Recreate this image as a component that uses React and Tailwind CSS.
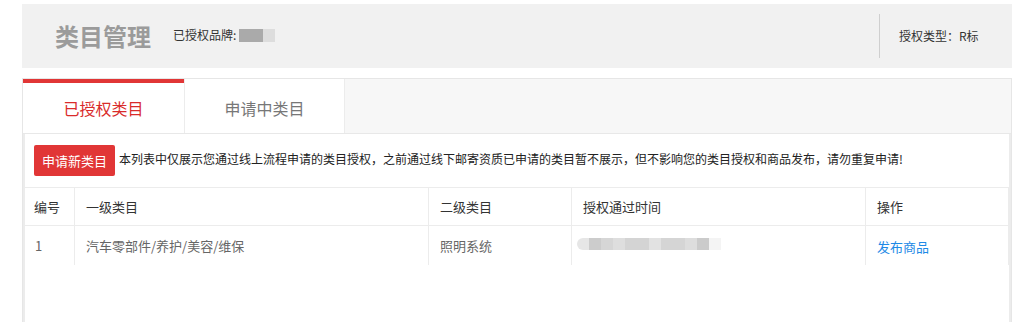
export default function App() {
  const font = { fontFamily: '"Noto Sans CJK SC", "Noto Sans", sans-serif' };
  const blocks = [
    ["#e6e6e6", 12],
    ["#cccccc", 12],
    ["#d6d6d6", 12],
    ["#dedede", 12],
    ["#d4d4d4", 24],
    ["#e2e2e2", 12],
    ["#d5d5d5", 24],
    ["#dddddd", 12],
    ["#cbcbcb", 12],
    ["#f4f4f4", 12],
  ];
  return (
    <div className="w-[1034px] h-[322px] bg-white overflow-hidden pt-1 px-[22px]" style={font}>
      {/* Header */}
      <div className="w-[990px] h-[64px] bg-[#f1f1f1] flex items-center">
        <div className="pl-[33px] text-[24px] font-bold text-[#9b9b9b] leading-none">类目管理</div>
        <div className="ml-[22px] flex items-center text-[12px] text-[#333] -mt-[2px]">
          <span>已授权品牌:</span>
          <span className="ml-[3px] w-[24px] h-[13px] bg-[#aaaaaa]" />
          <span className="w-[12px] h-[13px] bg-[#dddddd]" />
        </div>
        <div className="ml-auto w-[133px] h-[44px] border-l border-[#cfcfcf] flex items-center pl-[19px] text-[12px] text-[#333]">
          授权类型：R标
        </div>
      </div>

      {/* Tabs container */}
      <div className="mt-[10px] w-[990px] h-[300px] border border-[#e6e6e6] flex flex-col">
        <div className="h-[55px] bg-[#f7f7f7] border-b border-[#e8e8e8] flex shrink-0">
          <div className="w-[161px] bg-white border-t-[4px] border-[#e13636] flex items-center justify-center text-[16px] text-[#d92b2b] pb-[1px]">
            已授权类目
          </div>
          <div className="w-[161px] bg-white border-r border-l border-[#ececec] flex items-center justify-center text-[16px] text-[#777] pt-[3px]">
            申请中类目
          </div>
        </div>

        <div className="flex-1 border-x-[2px] border-[#ececec] bg-white">
          <div className="flex items-center mt-[11px] mb-[11px] pl-[9px] h-[31px]">
            <div className="w-[81px] h-[31px] bg-[#e13636] rounded-[2px] flex items-center justify-center text-white text-[13px]">
              申请新类目
            </div>
            <div className="ml-[4px] text-[12px] text-[#222] whitespace-nowrap -mt-[3px]">
              本列表中仅展示您通过线上流程申请的类目授权，之前通过线下邮寄资质已申请的类目暂不展示，但不影响您的类目授权和商品发布，请勿重复申请!
            </div>
          </div>

          <div className="grid grid-cols-[49px_354px_143px_294px_144px] text-[13px] border-t border-[#ececec]">
            <div className="h-[38px] flex items-center pl-[9px] text-[#333] border-b border-[#ececec]">编号</div>
            <div className="h-[38px] flex items-center pl-[11px] text-[#333] border-b border-l border-[#ececec]">一级类目</div>
            <div className="h-[38px] flex items-center pl-[11px] text-[#333] border-b border-l border-[#ececec]">二级类目</div>
            <div className="h-[38px] flex items-center pl-[11px] text-[#333] border-b border-l border-[#ececec]">授权通过时间</div>
            <div className="h-[38px] flex items-center pl-[11px] text-[#333] border-b border-l border-[#ececec] border-r">操作</div>

            <div className="h-[39px] flex items-center pl-[10px] text-[#666]">1</div>
            <div className="h-[39px] flex items-center pl-[11px] text-[#666] border-l border-[#ececec]">汽车零部件/养护/美容/维保</div>
            <div className="h-[39px] flex items-center pl-[11px] text-[#666] border-l border-[#ececec]">照明系统</div>
            <div className="h-[39px] flex items-center pl-[5px] border-l border-[#ececec]">
              <div className="flex h-[12px] -mt-[4px]">
                {blocks.map(([c, w], i) => (
                  <span
                    key={i}
                    className={i === 0 ? "rounded-l-[6px]" : ""}
                    style={{ backgroundColor: c, width: w, height: 12 }}
                  />
                ))}
              </div>
            </div>
            <div className="h-[39px] flex items-center pl-[11px] text-[#1e8ae6] border-l border-r border-[#ececec] pt-[2px]">发布商品</div>
          </div>
        </div>
      </div>
    </div>
  );
}
